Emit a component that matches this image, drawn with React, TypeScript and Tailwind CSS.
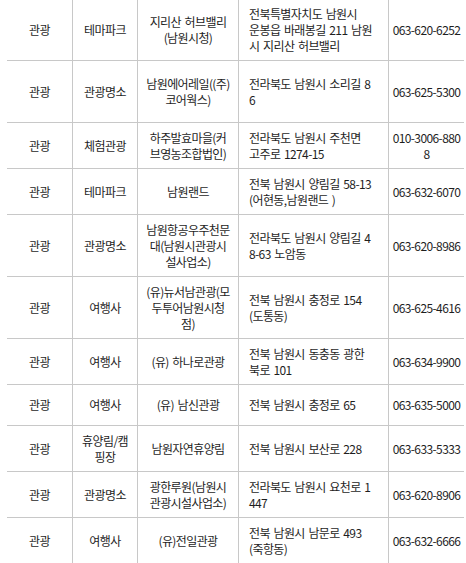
import React from "react";

type Row = {
  h: string;
  a: string;
  b: string[];
  c: string[];
  d: string[];
  e: string[];
};

const rows: Row[] = [
  { h: "h-[61px]", a: "관광", b: ["테마파크"], c: ["지리산 허브밸리", "(남원시청)"], d: ["전북특별자치도 남원시", "운봉읍 바래봉길 211 남원", "시 지리산 허브밸리"], e: ["063-620-6252"] },
  { h: "h-[62px]", a: "관광", b: ["관광명소"], c: ["남원에어레일((주)", "코어웍스)"], d: ["전라북도 남원시 소리길 8", "6"], e: ["063-625-5300"] },
  { h: "h-[46px]", a: "관광", b: ["체험관광"], c: ["하주발효마을(커", "브영농조합법인)"], d: ["전라북도 남원시 주천면", "고주로 1274-15"], e: ["010-3006-880", "8"] },
  { h: "h-[46px]", a: "관광", b: ["테마파크"], c: ["남원랜드"], d: ["전북 남원시 양림길 58-13", "(어현동,남원랜드 )"], e: ["063-632-6070"] },
  { h: "h-[62px]", a: "관광", b: ["관광명소"], c: ["남원항공우주천문", "대(남원시관광시", "설사업소)"], d: ["전라북도 남원시 양림길 4", "8-63 노암동"], e: ["063-620-8986"] },
  { h: "h-[62px]", a: "관광", b: ["여행사"], c: ["(유)뉴서남관광(모", "두투어남원시청", "점)"], d: ["전북 남원시 충정로 154", "(도통동)"], e: ["063-625-4616"] },
  { h: "h-[46px]", a: "관광", b: ["여행사"], c: ["(유) 하나로관광"], d: ["전북 남원시 동충동 광한", "북로 101"], e: ["063-634-9900"] },
  { h: "h-[41px]", a: "관광", b: ["여행사"], c: ["(유) 남신관광"], d: ["전북 남원시 충정로 65"], e: ["063-635-5000"] },
  { h: "h-[46px]", a: "관광", b: ["휴양림/캠", "핑장"], c: ["남원자연휴양림"], d: ["전북 남원시 보산로 228"], e: ["063-633-5333"] },
  { h: "h-[46px]", a: "관광", b: ["관광명소"], c: ["광한루원(남원시", "관광시설사업소)"], d: ["전라북도 남원시 요천로 1", "447"], e: ["063-620-8906"] },
  { h: "h-[46px]", a: "관광", b: ["여행사"], c: ["(유)전일관광"], d: ["전북 남원시 남문로 493", "(죽항동)"], e: ["063-632-6666"] },
];

function Lines({ lines }: { lines: string[] }) {
  return (
    <>
      {lines.map((l, i) => (
        <span key={i} className="block whitespace-nowrap">
          {l}
        </span>
      ))}
    </>
  );
}

export default function App() {
  return (
    <div
      className="bg-white w-[466px] h-[563px] overflow-hidden text-[#1e1e1e] text-[12px] leading-4 tracking-[-0.6px] [word-spacing:1.5px]"
      style={{ fontFamily: '"Noto Sans CJK KR", "Noto Sans", sans-serif' }}
    >
      <div className="ml-[7px] w-[457px] flex flex-col">
        {rows.map((r, i) => (
          <div key={i} className={`${r.h} box-border flex border-b border-[#c8c8c8]`}>
            <div className="w-[65px] flex items-center justify-center text-center">
              {r.a}
            </div>
            <div className="w-[65px] border-l border-[#c8c8c8] flex items-center justify-center text-center">
              <div>
                <Lines lines={r.b} />
              </div>
            </div>
            <div className="w-[101px] border-l border-[#c8c8c8] flex items-center justify-center text-center">
              <div>
                <Lines lines={r.c} />
              </div>
            </div>
            <div className="w-[150px] border-l border-[#c8c8c8] flex items-center pl-[10px] text-left">
              <div>
                <Lines lines={r.d} />
              </div>
            </div>
            <div className="w-[76px] border-l border-[#c8c8c8] flex items-center justify-center text-center">
              <div>
                <Lines lines={r.e} />
              </div>
            </div>
          </div>
        ))}
      </div>
    </div>
  );
}
